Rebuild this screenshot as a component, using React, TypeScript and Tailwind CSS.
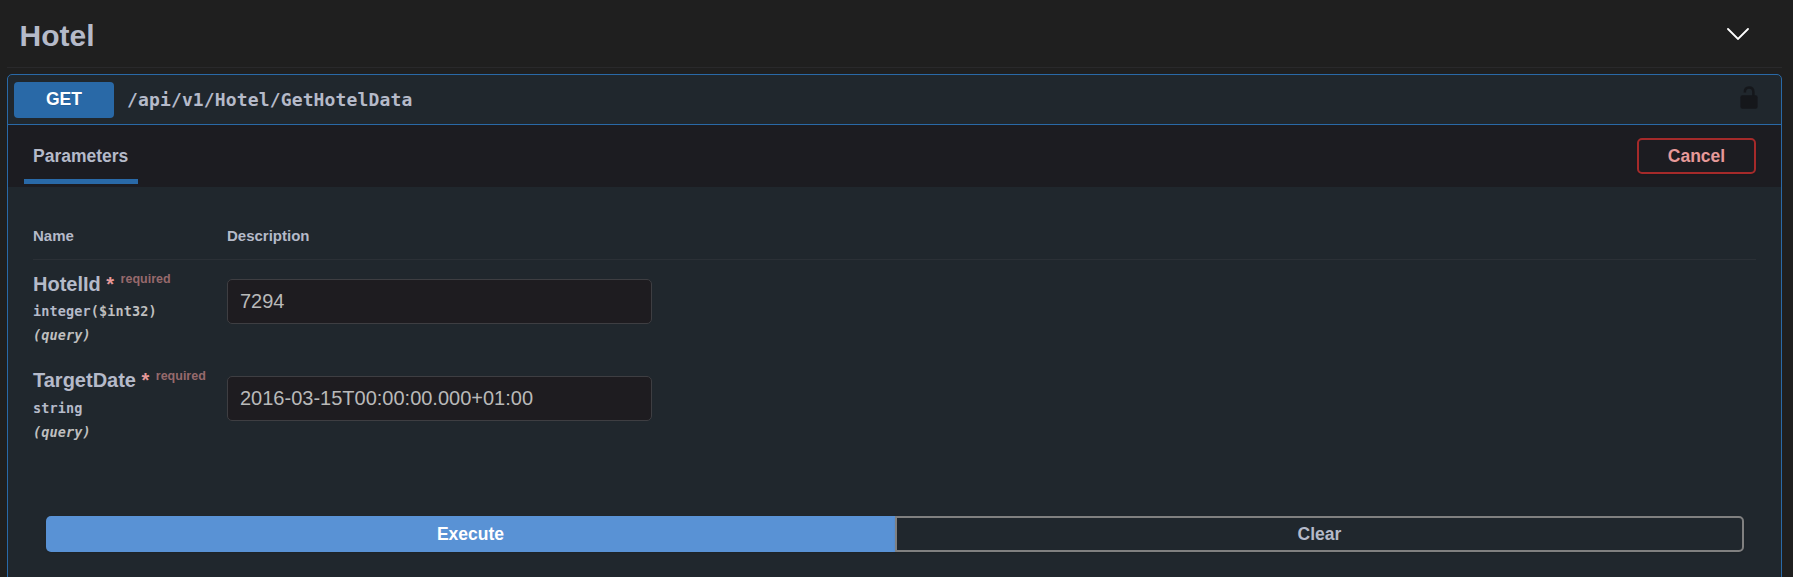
import React from "react";

type Param = { name: string; type: string; format?: string; value: string };

const params: Param[] = [
  { name: "HotelId", type: "integer", format: "($int32)", value: "7294" },
  { name: "TargetDate", type: "string", value: "2016-03-15T00:00:00.000+01:00" },
];

function ParamRow({ name, type, format, value }: Param) {
  return (
    <div className="group flex h-[97px]">
      <div className="w-[194px] shrink-0 pt-[12px] font-bold">
        <div className="flex h-[24px] items-start text-[20px] leading-[23px] text-[#b5bac9] group-first-of-type:leading-[24px]">
          <span>{name}</span>
          <span className="ml-[5.5px] text-[#e69999]">*</span>
          <span className="ml-[6.5px] text-[12.5px] leading-[15px] text-[#e69999]/60">required</span>
        </div>
        <div className="mt-[8px] font-['DejaVu_Sans_Mono',monospace] text-[13.5px] leading-[15px] tracking-[0.12px] text-[#b5bac9]">
          {type}
          <span className="text-[#bfbfbf]">{format}</span>
        </div>
        <div className="mt-[9px] font-['DejaVu_Sans_Mono',monospace] text-[13.5px] italic leading-[15px] tracking-[0.12px] text-[#bfbfbf]">
          (query)
        </div>
      </div>
      <input
        className="mt-[19px] h-[45px] w-[425px] rounded-[5px] border border-[#3e3e42] bg-[#1e1c20] px-[12px] text-[20px] text-[#b9b9b9] outline-none"
        defaultValue={value}
      />
    </div>
  );
}

export default function App() {
  return (
    <div className="h-[577px] overflow-hidden bg-[#1f1f1f] pl-[7px] pr-[11px] font-['Liberation_Sans',Arial,sans-serif]">
      <header className="flex h-[68px] items-center justify-between border-b border-[#29292b] pl-[12.5px] pr-[33.5px]">
        <h3 className="pt-[4px] text-[30px] font-bold leading-[36px] text-[#b5bac9]">Hotel</h3>
        <svg className="h-[12px] w-[22px]" viewBox="0 0 22 12" fill="none" stroke="#fff" strokeWidth="1.8" strokeLinecap="round">
          <path d="M1 1 11 11 21 1" />
        </svg>
      </header>

      <section className="mt-[6px] h-[540px] rounded-[5px] border border-[#2969a7] bg-[#20272d]">
        <div className="flex h-[50px] items-center border-b border-[#2969a7] pl-[6px] pr-[23px]">
          <span className="flex h-[36px] w-[100px] items-center justify-center rounded-[4px] bg-[#2969a7] pb-px text-[17.5px] font-bold text-white [text-shadow:0_1px_0_rgba(0,0,0,0.1)]">
            GET
          </span>
          <span className="ml-[13px] font-['DejaVu_Sans_Mono',monospace] text-[18px] font-bold leading-[20px] tracking-[0.14px] text-[#b5bac9]">
            /api/v1/Hotel/GetHotelData
          </span>
          <svg className="mb-[4px] ml-auto h-[23px] w-[18px]" viewBox="0 0 18 23">
            <path d="M4.8 6.6C4.8 3.6 6.4 1.6 9 1.6c2.8 0 4.4 2 4.4 4.6V11" fill="none" stroke="#15171b" strokeWidth="2.5" />
            <rect x="0.4" y="9.2" width="17.2" height="13.6" rx="2" fill="#15171b" />
          </svg>
        </div>

        <div className="flex h-[62px] items-center justify-between bg-[#1c1c21] pl-[16px] pr-[25px]">
          <div className="flex h-full w-[114px] flex-col justify-end pb-[3px]">
            <h4 className="mb-[13px] pl-[9px] text-[17.5px] font-bold leading-[20px] text-[#b5bac9]">Parameters</h4>
            <div className="h-[5px] bg-[#2969a7]" />
          </div>
          <button className="h-[36px] w-[119px] rounded-[5px] border-2 border-[#a52a2a] text-[17.5px] font-bold leading-[20px] text-[#e69999] shadow-[0_1px_2px_rgba(0,0,0,0.1)]">
            Cancel
          </button>
        </div>

        <div className="px-[25px] pt-[40px]">
          <div className="flex h-[33px] border-b border-[#2b3036] text-[15px] font-bold leading-[18px] text-[#b5bac9]">
            <div className="w-[194px]">Name</div>
            <div>Description</div>
          </div>
          <div>
            {params.map((p) => (
              <ParamRow key={p.name} {...p} />
            ))}
          </div>
        </div>

        <div className="flex pl-[38px] pr-[37px] pt-[62px] text-[17.5px] font-bold leading-[20px]">
          <button className="h-[36px] w-1/2 rounded-l-[5px] bg-[#5992d5] text-white shadow-[0_1px_2px_rgba(0,0,0,0.1)]">
            Execute
          </button>
          <button className="h-[36px] w-1/2 rounded-r-[5px] border-2 border-[#808080] text-[#b5bac9] shadow-[0_1px_2px_rgba(0,0,0,0.1)]">
            Clear
          </button>
        </div>
      </section>
    </div>
  );
}
